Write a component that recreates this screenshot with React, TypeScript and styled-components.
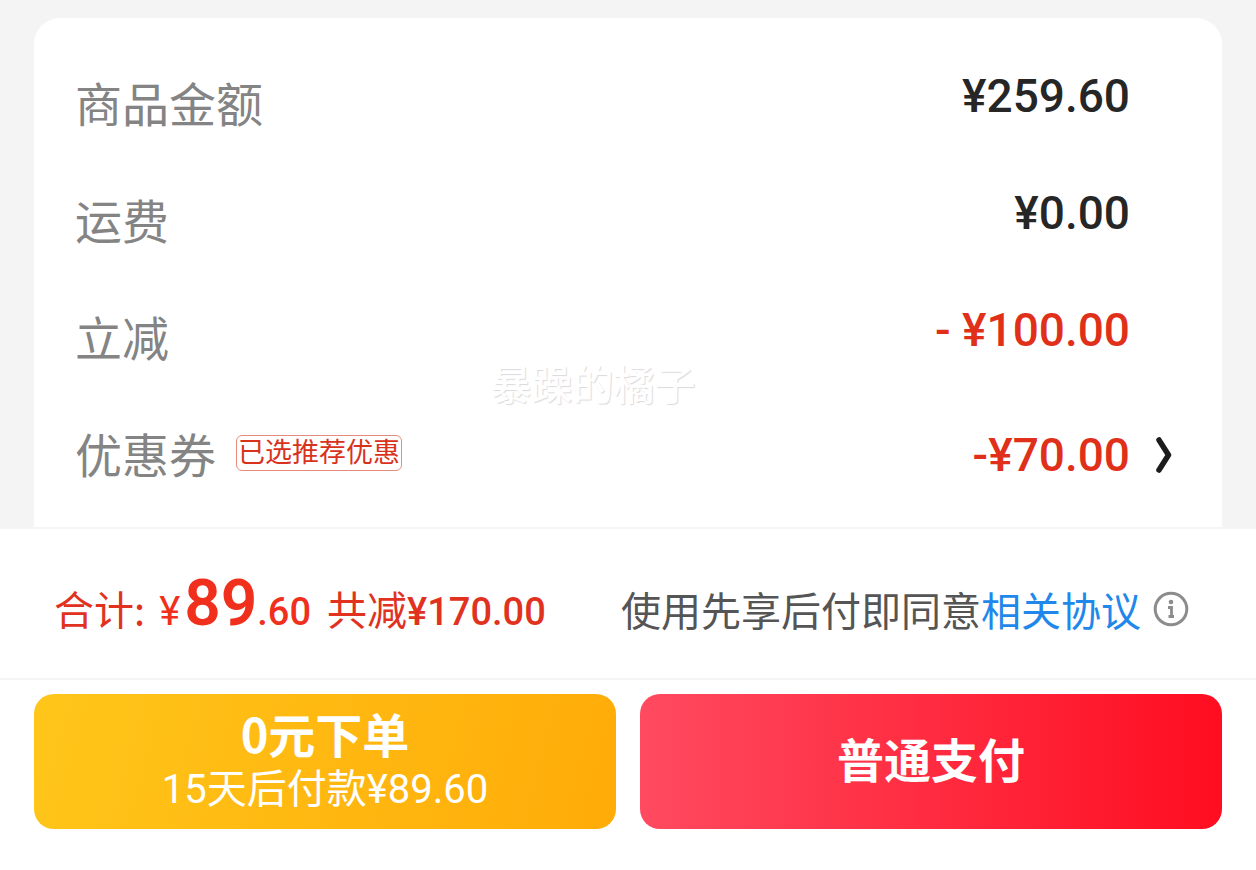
import React from "react";
import styled, { createGlobalStyle } from "styled-components";

const cjk = '"Noto Sans CJK SC", sans-serif';
const latin = 'Roboto, "Noto Sans CJK SC", sans-serif';

const GlobalStyle = createGlobalStyle`
  * { box-sizing: border-box; }
  body { margin: 0; background: #fff; font-family: ${cjk}; }
  button { border: 0; padding: 0; background: none; font-family: inherit; cursor: pointer; }
`;

const Backdrop = styled.main`
  background: #f4f4f4;
  padding: 18px 34px 0;
`;

const Card = styled.section`
  position: relative;
  background: #fff;
  border-radius: 26px 26px 0 0;
  padding: 51px 50px 37px 41px;
`;

const Rows = styled.dl`
  margin: 0;
  display: flex;
  flex-direction: column;
  gap: 47px;
`;

const Row = styled.div<{ $centered?: boolean }>`
  display: flex;
  justify-content: space-between;
  align-items: ${(p) => (p.$centered ? "center" : "flex-start")};
`;

const Label = styled.dt`
  display: flex;
  align-items: center;
  gap: 20px;
  padding-bottom: 4px;
  font-size: 47px;
  line-height: 66px;
  color: #848484;
`;

const Value = styled.dd<{ $discount?: boolean }>`
  margin: 0 42px 0 0;
  font: 500 46px/54px ${latin};
  color: ${(p) => (p.$discount ? "#e0301a" : "#262626")};
  white-space: pre;
`;

const CouponValue = styled(Value)`
  margin-right: 0;
`;

const CouponButton = styled.button`
  display: flex;
  align-items: center;
  gap: 26px;
  font: inherit;
  color: inherit;
`;

const Tag = styled.span`
  border: 1px solid #e58c80;
  border-radius: 6px;
  padding: 0 1px 4px;
  font-size: 27px;
  line-height: 30px;
  color: #d8321c;
`;

const Watermark = styled.span`
  position: absolute;
  top: 334px;
  left: 0;
  right: 70px;
  text-align: center;
  font-size: 41px;
  line-height: 60px;
  font-weight: 500;
  color: #fff;
  text-shadow: 1px 1px 1px #d9d9de;
  pointer-events: none;
`;

const Summary = styled.section`
  display: flex;
  justify-content: space-between;
  align-items: center;
  border: solid #f5f5f5;
  border-width: 2px 0;
  padding: 36px 67px 33px 54px;
  font-size: 40px;
  line-height: 78px;
  white-space: nowrap;
`;

const Total = styled.p`
  margin: 0;
  display: flex;
  align-items: baseline;
  height: 80px;
  color: #e0321f;
`;

const Price = styled.span`
  margin: 0 16px 0 14px;
  font: 500 38px/78px ${latin};
  color: #f0301c;
`;

const Currency = styled.span`
  margin-right: 4px;
  font-size: 40px;
  font-weight: 400;
`;

const Whole = styled.span`
  font-size: 64px;
  font-weight: 600;
`;

const Saved = styled.span`
  font: 500 38px/78px ${latin};
`;

const Agreement = styled.p`
  margin: 0;
  padding-top: 8px;
  display: flex;
  align-items: center;
  line-height: 70px;
  color: #555;
`;

const AgreementLink = styled.a`
  color: #1f88ea;
  text-decoration: none;
`;

const InfoButton = styled.button`
  display: flex;
  margin-left: 12px;
`;

const Actions = styled.footer`
  display: grid;
  grid-template-columns: 1fr 1fr;
  gap: 24px;
  padding: 14px 34px 41px;
`;

const PayButton = styled.button<{ $fill: string }>`
  display: flex;
  flex-direction: column;
  align-items: center;
  justify-content: center;
  min-height: 135px;
  padding-bottom: 8px;
  border-radius: 20px;
  background: ${(p) => p.$fill};
  color: #fff;
`;

const PayTitle = styled.span`
  font-size: 47px;
  font-weight: 700;
  line-height: 54px;
`;

const PayNote = styled.span`
  padding-top: 10px;
  font: 400 40px/40px ${latin};
`;

export default function App() {
  return (
    <>
      <GlobalStyle />
      <Backdrop>
        <Card>
          <Rows>
            <Row>
              <Label>商品金额</Label>
              <Value>¥259.60</Value>
            </Row>
            <Row>
              <Label>运费</Label>
              <Value>¥0.00</Value>
            </Row>
            <Row>
              <Label>立减</Label>
              <Value $discount>- ¥100.00</Value>
            </Row>
            <Row $centered>
              <Label>
                优惠券
                <Tag>已选推荐优惠</Tag>
              </Label>
              <CouponValue $discount>
                <CouponButton type="button">
                  -¥70.00
                  <svg width="16" height="36" viewBox="0 0 16 36" fill="none" aria-hidden="true">
                    <path d="M3 3 L12.500 18 L3 33" stroke="#1c1c1c" strokeWidth="5.500" strokeLinecap="round" strokeLinejoin="round" />
                  </svg>
                </CouponButton>
              </CouponValue>
            </Row>
          </Rows>
          <Watermark>暴躁的橘子</Watermark>
        </Card>
      </Backdrop>
      <Summary>
        <Total>
          合计:
          <Price>
            <Currency>¥</Currency>
            <Whole>89</Whole>.60
          </Price>
          共减<Saved>¥170.00</Saved>
        </Total>
        <Agreement>
          使用先享后付即同意
          <AgreementLink href="#agreement">相关协议</AgreementLink>
          <InfoButton type="button" aria-label="说明">
            <svg width="36" height="36" viewBox="0 0 36 36" fill="none" aria-hidden="true">
              <circle cx="18" cy="18" r="15.800" stroke="#8c8c8c" strokeWidth="3" />
              <circle cx="18" cy="11" r="2.300" fill="#8c8c8c" />
              <path d="M15 16.500 H18.500 V26 M15.500 25.500 H21" stroke="#8c8c8c" strokeWidth="2.800" />
            </svg>
          </InfoButton>
        </Agreement>
      </Summary>
      <Actions>
        <PayButton type="button" $fill="linear-gradient(105deg, #ffc61a, #ffab08)">
          <PayTitle>0元下单</PayTitle>
          <PayNote>15天后付款¥89.60</PayNote>
        </PayButton>
        <PayButton type="button" $fill="linear-gradient(90deg, #ff4a60, #ff0d20)">
          <PayTitle>普通支付</PayTitle>
        </PayButton>
      </Actions>
    </>
  );
}
